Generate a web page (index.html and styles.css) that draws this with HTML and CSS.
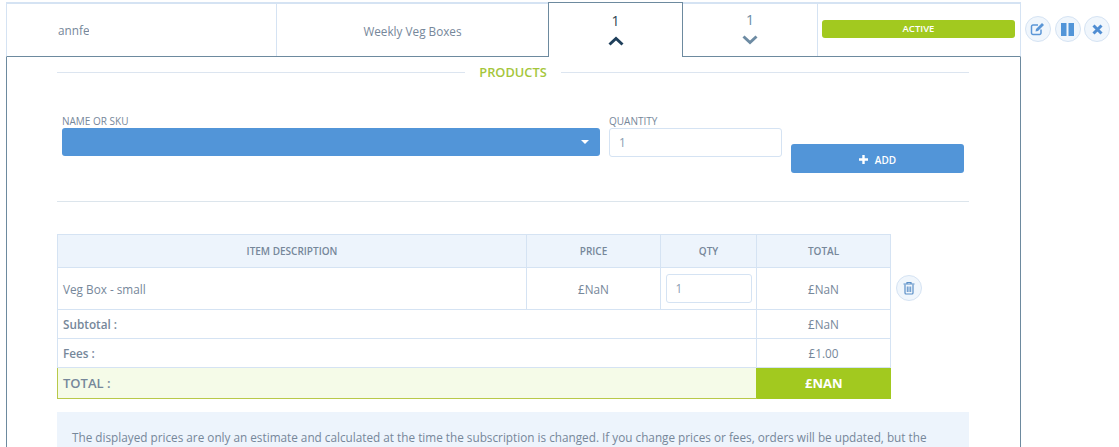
FILE: index.html
```html
<!DOCTYPE html>
<html lang="en">
<head>
<meta charset="utf-8">
<title>Subscription</title>
<link rel="stylesheet" href="styles.css">
</head>
<body>
<div class="page">
  <div class="top">
    <div class="row">
      <div class="cell c-user"><span class="user">annfe</span></div>
      <div class="cell c-plan">Weekly Veg Boxes</div>
      <div class="cell c-open">
        <span class="num">1</span>
        <svg class="chev" width="16" height="10" viewBox="0 0 16 10"><path d="M1.500 8.500 8 2.500l6.500 6" fill="none" stroke="#1f3f5b" stroke-width="3"/></svg>
      </div>
      <div class="cell c-next">
        <span class="num muted">1</span>
        <svg class="chev" width="16" height="10" viewBox="0 0 16 10"><path d="M1.500 1.500 8 7.500l6.500-6" fill="none" stroke="#6d8ba3" stroke-width="3"/></svg>
      </div>
      <div class="cell c-status"><span class="badge">ACTIVE</span></div>
    </div>
    <div class="actions">
      <span class="circle">
        <svg width="16" height="14" viewBox="0 0 16 14"><path d="M11 7.500V11a1.500 1.500 0 0 1-1.500 1.500H3A1.500 1.500 0 0 1 1.500 11V4.500A1.500 1.500 0 0 1 3 3h5" fill="none" stroke="#5b96d6" stroke-width="1.500"/><path d="M5.500 9.500 6 7l6-6 2 2-6 6z" fill="#5b96d6"/></svg>
      </span>
      <span class="circle">
        <svg width="13" height="13" viewBox="0 0 13 13"><path d="M0 0h5.500v13H0zM7.500 0H13v13H7.500z" fill="#5295d8"/></svg>
      </span>
      <span class="circle">
        <svg width="11" height="11" viewBox="0 0 11 11"><path d="M1.500 1.500l8 8M9.500 1.500l-8 8" stroke="#4f8dd2" stroke-width="3"/></svg>
      </span>
    </div>
  </div>

  <div class="panel">
    <div class="legend"><span class="legend-text">PRODUCTS</span></div>

    <div class="form">
      <div class="field f-name">
        <label class="label">NAME OR SKU</label>
        <div class="select"><span class="caret"></span></div>
      </div>
      <div class="field f-qty">
        <label class="label">QUANTITY</label>
        <div class="input">1</div>
      </div>
      <button class="add" type="button">
        <svg width="9" height="9" viewBox="0 0 9 9"><path d="M4.500 0v9M0 4.500h9" stroke="#fff" stroke-width="2.400"/></svg>
        <span>ADD</span>
      </button>
    </div>

    <hr class="rule">

    <div class="table-wrap">
      <table class="items">
        <colgroup><col class="w1"><col class="w2"><col class="w3"><col class="w4"></colgroup>
        <thead>
          <tr class="r-head"><th>ITEM DESCRIPTION</th><th>PRICE</th><th>QTY</th><th>TOTAL</th></tr>
        </thead>
        <tbody>
          <tr class="r-item">
            <td class="left">Veg Box - small</td>
            <td>£NaN</td>
            <td><div class="input small">1</div></td>
            <td>£NaN</td>
          </tr>
          <tr class="r-sum"><td class="left strong" colspan="3">Subtotal :</td><td>£NaN</td></tr>
          <tr class="r-sum"><td class="left strong" colspan="3">Fees :</td><td>£1.00</td></tr>
          <tr class="r-total"><td class="left" colspan="3">TOTAL :</td><td class="grand">£NAN</td></tr>
        </tbody>
      </table>
      <span class="circle trash">
        <svg width="12" height="14" viewBox="0 0 12 14"><path d="M.5 3h11M4 3V1.500h4V3" fill="none" stroke="#5b8fc7" stroke-width="1.200"/><path d="M2 3.500v8.500a1 1 0 0 0 1 1h6a1 1 0 0 0 1-1V3.500" fill="none" stroke="#5b8fc7" stroke-width="1.200"/><path d="M4.300 5.500v5.500M6 5.500v5.500M7.700 5.500v5.500" stroke="#5b8fc7"/></svg>
      </span>
    </div>

    <div class="note">The displayed prices are only an estimate and calculated at the time the subscription is changed. If you change prices or fees, orders will be updated, but the</div>
  </div>
</div>
</body>
</html>
```
FILE: styles.css
```css
* { box-sizing: border-box; }
html, body { margin: 0; padding: 0; background: #fff; }
body { font-family: "Open Sans", "Liberation Sans", sans-serif; color: #76879a; font-size: 11.750px; }

.page { width: 1119px; height: 447px; overflow: hidden; padding: 2px 0 0 6px; }

.top { display: flex; align-items: flex-start; }
.row {
  display: flex;
  width: 1015px;
  height: 55px;
  border-top: 2px solid #d5e3f3;
  border-left: 1px solid #d5e3f3;
  border-right: 1px solid #d5e3f3;
  border-bottom: 1px solid #6d8a9f;
}
.cell {
  display: flex;
  flex-direction: column;
  align-items: center;
  justify-content: center;
  border-right: 1px solid #d5e3f3;
}
.c-user { width: 270px; align-items: flex-start; padding-left: 51px; }
.user { width: 31px; overflow: hidden; white-space: nowrap; }
.c-plan { width: 271px; border-right: 0; padding-top: 1px; }
.c-open {
  width: 135px;
  height: 55px;
  margin-top: -2px;
  border: 1px solid #6d8a9f;
  border-bottom: 0;
  background: #fff;
  padding-top: 2px;
}
.c-next { width: 135px; }
.c-status { flex: 1; border-right: 0; padding: 16px 5px 0 4px; justify-content: flex-start; }
.num { font-size: 14px; line-height: 19px; color: #2b3f52; margin-top: -6px; }
.num.muted { color: #6d8ba3; }
.chev { display: block; margin-top: 6px; }
.badge {
  display: block;
  width: 100%;
  height: 18px;
  line-height: 18px;
  border-radius: 3px;
  background: #a2c91f;
  color: #fff;
  font-size: 9.500px;
  font-weight: 600;
  text-align: center;
}

.actions { display: flex; gap: 3.500px; margin: 14px 0 0 4px; }
.circle {
  display: flex;
  align-items: center;
  justify-content: center;
  width: 26px;
  height: 26px;
  border-radius: 50%;
  border: 1px solid #d5e3f3;
  background: #f0f6fc;
}

.panel {
  width: 1015px;
  border-left: 1px solid #6d8a9f;
  border-right: 1px solid #6d8a9f;
  padding: 0 51px 0 50px;
  height: 400px;
}

.legend {
  display: flex;
  align-items: center;
  height: 30px;
  gap: 14px;
}
.legend::before, .legend::after { content: ""; flex: 1; height: 1px; background: #dce5f0; }
.legend-text { font-size: 12.800px; font-weight: 600; color: #a5c63b; }

.form { display: flex; align-items: flex-start; padding: 27px 0 0 5px; }
.field { display: flex; flex-direction: column; }
.f-name { width: 538px; margin-right: 9px; }
.f-qty { width: 173px; margin-right: 9px; }
.label { font-size: 10px; line-height: 13px; height: 14px; padding-top: 1px; color: #76879a; font-weight: 400; }
.select {
  position: relative;
  height: 28px;
  background: #5295d8;
  border-radius: 3px;
}
.caret {
  position: absolute;
  right: 11px;
  top: 12px;
  border-left: 4px solid transparent;
  border-right: 4px solid transparent;
  border-top: 4px solid #fff;
}
.input {
  height: 29px;
  line-height: 26px;
  padding-left: 9px;
  border: 1px solid #d5e3f3;
  border-radius: 3px;
  background: #fff;
  color: #8a9cb0;
  text-align: left;
}
.add {
  display: flex;
  align-items: center;
  justify-content: center;
  gap: 7px;
  width: 173px;
  height: 29px;
  margin-top: 30px;
  padding: 2px 0 0;
  border: 0;
  border-radius: 3px;
  background: #5295d8;
  color: #fff;
  font: 600 10px "Open Sans", "Liberation Sans", sans-serif;
}

.rule { border: 0; height: 1px; background: #dce5ec; margin: 28px 0 32px; }

.table-wrap { display: flex; align-items: flex-start; }
.items { width: 833px; border-collapse: collapse; table-layout: fixed; }
.w1 { width: 469px; }
.w2 { width: 134px; }
.w3 { width: 96px; }
.w4 { width: 134px; }
.items th, .items td { border: 1px solid #d5e3f3; padding: 0; text-align: center; font-weight: 400; }
.r-head th { height: 33px; background: #edf4fc; font-size: 10px; font-weight: 600; color: #76879a; }
.r-item td { height: 42px; }
.r-sum td { height: 29px; }
.r-total td { height: 31px; background: #f5fbe8; border: 0; border-top: 1px solid #d5e3f3; border-bottom: 1px solid #b8c94a; }
.r-total .left { border-left: 1px solid #b8c94a; border-top-color: #b8c94a; font-size: 13px; font-weight: 600; }
.items .left { text-align: left; padding-left: 5px; }
.items .strong { font-weight: 600; }
.items .grand { background: #a2c91f; border-left: 1px solid #a2c91f; border-color: #a2c91f; color: #fff; font-size: 13px; font-weight: 700; }
.input.small { width: 86px; margin: 0 auto; height: 29px; }
.trash { margin: 41px 0 0 5px; }

.note {
  margin-top: 13px;
  height: 60px;
  padding: 16px 15px 0;
  background: #edf4fc;
  font-size: 11.750px;
  line-height: 18px;
  white-space: nowrap;
  overflow: hidden;
}
```
